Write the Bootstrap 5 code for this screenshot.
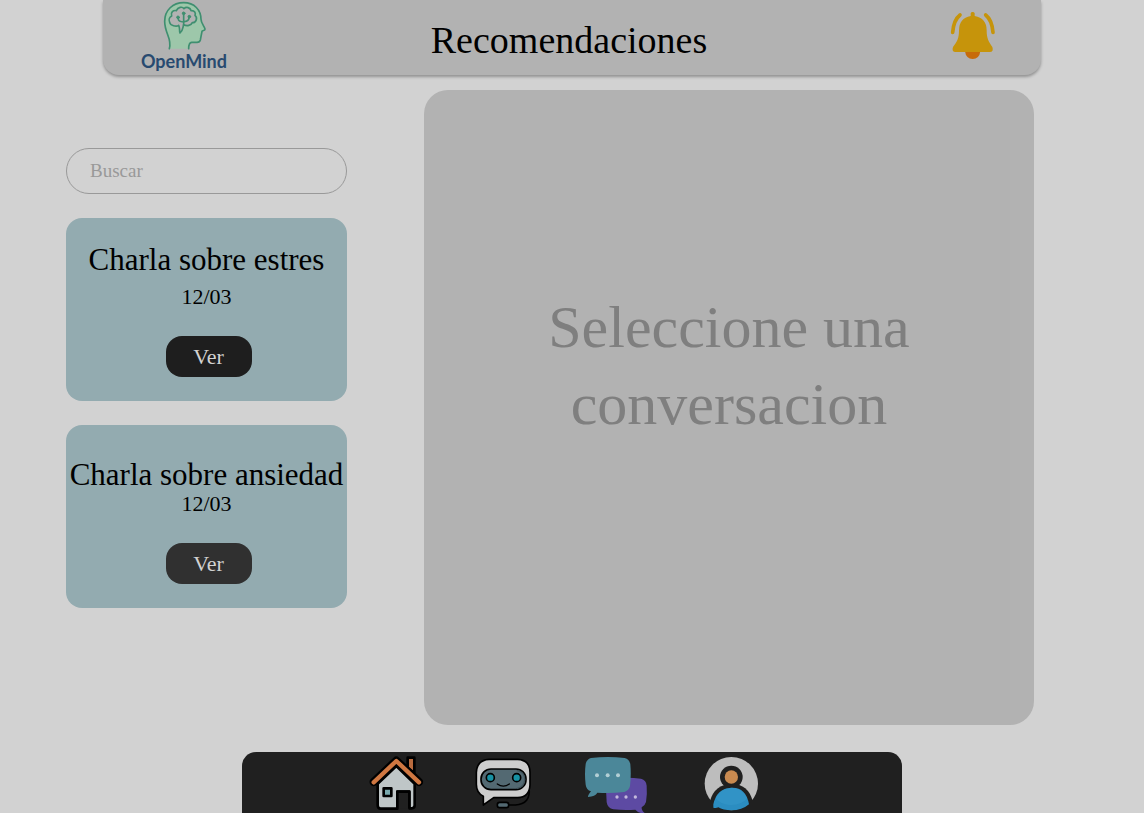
<!DOCTYPE html>
<html lang="es">
<head>
<meta charset="utf-8">
<meta name="viewport" content="width=device-width, initial-scale=1">
<title>OpenMind - Recomendaciones</title>
<link href="https://cdn.jsdelivr.net/npm/bootstrap@5.3.0/dist/css/bootstrap.min.css" rel="stylesheet">
<style>
  body { background: #d2d2d2; color: #000; font-family: "Liberation Serif", serif; }
  .top-bar { width: 82%; height: 75px; background: #b2b2b2; border-radius: 0 0 16px 16px; box-shadow: 0 2px 3px rgba(0, 0, 0, .3); padding: 0 45px 4px 39px; }
  .page-title { font-size: 38px; line-height: 48px; }
  .brand { color: #284a70; font: 700 18px/20px Lato, sans-serif; width: 84px; }
  .brand:hover { color: #284a70; }
  .content { padding: 15px 110px 27px 66px; gap: 24px 77px; }
  .talks { flex: 0 0 281px; padding-top: 58px; gap: 24px; }
  .search-box { height: 46px; border: 1px solid #999; padding: 0 23px; font-size: 19px; }
  .search-box, .search-box:focus { background: transparent; color: #222; }
  .search-box::placeholder { color: #999; }
  .talk { height: 183px; background: #93abb0; border-radius: 16px; padding-bottom: 24px; }
  .talk-title { font-size: 31px; line-height: 32px; }
  .talk-date { font-size: 22px; line-height: 26px; margin-bottom: 26px; }
  .btn-view { width: 86px; height: 41px; border-radius: 16px; font-size: 22px; line-height: 24px; background: #1e1e1e; color: #d2d2d2; }
  .btn-view:hover, .btn-soft { background: #303030; color: #d2d2d2; }
  .viewer { background: #b2b2b2; border-radius: 24px; color: #7f7f7f; padding-bottom: 84px; }
  .viewer p { font-size: 60px; line-height: 77px; max-width: 420px; }
  .dock { width: 660px; max-width: 100%; height: 61px; background: #202020; border-radius: 14px 14px 0 0; padding-right: 12px; gap: 50px; }
  @media (max-width: 900px) {
    .content { padding: 15px 24px 27px; }
    .talks { flex-basis: auto; padding-top: 16px; }
    .viewer { padding: 60px 20px; }
    .dock { gap: 16px; }
    .top-bar { width: 100%; padding: 0 16px; }
  }
</style>
</head>
<body>
<div class="d-flex flex-column min-vh-100">
  <header class="top-bar mx-auto d-flex align-items-center">
    <div class="col d-flex">
      <a href="#" class="brand text-decoration-none d-flex flex-column align-items-center">
        <svg width="46" height="50" viewBox="214 6 138 150" fill="none" stroke="#3f8f70" stroke-width="5" stroke-linecap="round" stroke-linejoin="round" aria-hidden="true">
          <path fill="#9dc7aa" stroke="none" d="M239 149C248 117 225 105 225 67C225 33 250 11 282 11C314 11 334 33 334 61C334 73 346 84 346 91C346 95 339 94 337 97L332 123Q330 131 320 130H306Q297 131 297 149Z"/>
          <path d="M239 149C248 117 225 105 225 67C225 33 250 11 282 11C314 11 334 33 334 61C334 73 346 84 346 91C346 95 339 94 337 97L332 123Q330 131 320 130H306Q297 131 297 149"/>
          <path fill="#b2b2b2" d="M267 79C260 84 242 80 240 70C236 62 240 54 246 51C242 40 251 33 260 35C265 24 278 22 283 29C290 22 302 26 304 35C315 34 319 42 316 49C325 57 319 72 308 71C304 80 292 82 282 77C279 85 281 93 271 102C268 94 272 89 267 79Z"/>
          <path d="M282 46V77M266 56V61Q267 67 281 69M298 56Q298 66 284 68"/>
          <g fill="#3f8f70" stroke-width="3"><circle cx="282" cy="43" r="4"/><circle cx="265" cy="55" r="4"/><circle cx="299" cy="53" r="4"/></g>
        </svg>
        <span>OpenMind</span>
      </a>
    </div>
    <h1 class="page-title fw-normal m-0 pt-2">Recomendaciones</h1>
    <div class="col d-flex justify-content-end">
      <button type="button" class="btn p-0 border-0 d-flex" aria-label="Notificaciones">
        <svg width="46" height="50" viewBox="90 33 138 150" aria-hidden="true">
          <path fill="#c76b0a" d="M135 154H181Q178 177 158 177T135 154Z"/>
          <path fill="#c6940b" d="M152 48V40Q153 36 158 36T164 40V48Q200 55 200 91C200 116 206 125 217 141Q222 156 209 156H107Q94 156 99 141C111 125 117 116 117 91Q117 55 152 48Z"/>
          <path fill="none" stroke="#c6940b" stroke-width="11" stroke-linecap="round" d="M120 45Q101 60 98 97M197 45Q216 60 219 97"/>
        </svg>
      </button>
    </div>
  </header>

  <main class="content flex-grow-1 d-flex flex-column flex-lg-row">
    <section class="talks d-flex flex-column">
      <input type="search" class="search-box form-control rounded-pill" placeholder="Buscar" aria-label="Buscar">
      <article class="talk d-flex flex-column align-items-center justify-content-end">
        <h2 class="talk-title fw-normal text-nowrap mb-2">Charla sobre estres</h2>
        <p class="talk-date">12/03</p>
        <button type="button" class="btn btn-view border-0 p-0 ms-1">Ver</button>
      </article>
      <article class="talk d-flex flex-column align-items-center justify-content-end">
        <h2 class="talk-title fw-normal text-nowrap mb-0">Charla sobre ansiedad</h2>
        <p class="talk-date">12/03</p>
        <button type="button" class="btn btn-view btn-soft border-0 p-0 ms-1">Ver</button>
      </article>
    </section>
    <section class="viewer flex-grow-1 d-flex align-items-center justify-content-center">
      <p class="text-center m-0">Seleccione una conversacion</p>
    </section>
  </main>

  <nav class="dock mx-auto d-flex justify-content-center" aria-label="Principal">
    <a href="#" class="d-flex" aria-label="Inicio">
      <svg width="56" height="61" viewBox="27 21 168 183" stroke="#000" stroke-linejoin="round" aria-hidden="true">
        <path fill="#b96b3e" stroke-width="8" d="M143 38H163V84L143 68Z"/>
        <path fill="#bfc6c7" stroke-width="8" d="M53 116L109 63L164 116V181Q164 190 155 190H148V140H112V191H62Q53 191 53 181Z"/>
        <path fill="#202020" stroke-width="8" d="M112 191V140H148V191"/>
        <path fill="none" stroke-width="25" stroke-linecap="round" d="M41 111L109 47L177 111"/>
        <path fill="none" stroke="#cf7741" stroke-width="13" stroke-linecap="round" d="M41 112L109 48L177 112"/>
        <path fill="#79a9ad" stroke-width="8" d="M71 130H94V153H71Z"/>
      </svg>
    </a>
    <a href="#" class="d-flex" aria-label="Asistente">
      <svg width="58" height="61" viewBox="30 21 174 183" fill="none" stroke="#000" stroke-width="5" stroke-linejoin="round" stroke-linecap="round" aria-hidden="true">
        <path d="M192 128Q198 178 151 180H132"/>
        <path fill="#cdcdcd" d="M72 43H158Q195 45 195 82V120Q193 157 158 158H86L55 180V154Q34 144 34 118V82Q36 45 72 43Z"/>
        <rect x="48" y="72" width="135" height="62" rx="30" fill="#536972"/>
        <path stroke="#40535b" stroke-width="4" d="M157 77Q180 82 179 104Q178 125 157 130"/>
        <circle cx="76" cy="98" r="12" fill="#1791a3"/><circle cx="155" cy="98" r="12" fill="#1791a3"/>
        <path stroke-width="4" d="M97 117Q115 130 133 117"/>
        <rect x="97" y="172" width="34" height="16" rx="7" fill="#536972"/>
      </svg>
    </a>
    <a href="#" class="d-flex" aria-label="Conversaciones">
      <svg width="66" height="61" viewBox="24 21 198 183" aria-hidden="true">
        <path fill="#5d4aa3" d="M112 101Q155 96 198 101Q214 105 215 122Q217 145 213 171Q210 182 200 187Q199 197 209 204H197Q188 202 181 194Q150 197 115 193Q98 190 95 172Q92 145 95 120Q97 105 112 101Z"/>
        <path fill="#4b8799" d="M48 39Q99 33 149 39Q163 42 166 58Q169 90 165 123Q162 137 148 141Q107 146 67 143Q61 154 39 156Q38 152 48 139Q34 134 32 119Q28 87 32 57Q35 43 48 39Z"/>
        <g fill="#b3cfd5"><circle cx="66" cy="91" r="6"/><circle cx="98" cy="91" r="6"/><circle cx="129" cy="91" r="6"/></g>
        <g fill="#c4b9dc"><circle cx="126" cy="156" r="5"/><circle cx="153" cy="156" r="5"/><circle cx="181" cy="156" r="5"/></g>
      </svg>
    </a>
    <a href="#" class="d-flex" aria-label="Perfil">
      <svg width="64" height="61" viewBox="27 21 192 183" aria-hidden="true">
        <circle cx="124" cy="116" r="80" fill="#bdbdbd"/>
        <circle cx="124" cy="96" r="34" fill="#202020"/>
        <path fill="#202020" d="M60 168Q74 118 124 117T188 168L174 196H74Z"/>
        <circle cx="124" cy="96" r="20" fill="#c98a50"/>
        <path fill="#2b8dc1" d="M70 178Q80 130 124 128T177 178Q156 196 124 196Q99 196 85 187Q77 191 70 188Z"/>
        <path fill="#3799cb" d="M77 160Q92 129 124 128T172 160Q156 179 124 180Q95 181 77 160Z" opacity=".5"/>
      </svg>
    </a>
  </nav>
</div>
<script src="https://cdn.jsdelivr.net/npm/bootstrap@5.3.0/dist/js/bootstrap.bundle.min.js"></script>
</body>
</html>
